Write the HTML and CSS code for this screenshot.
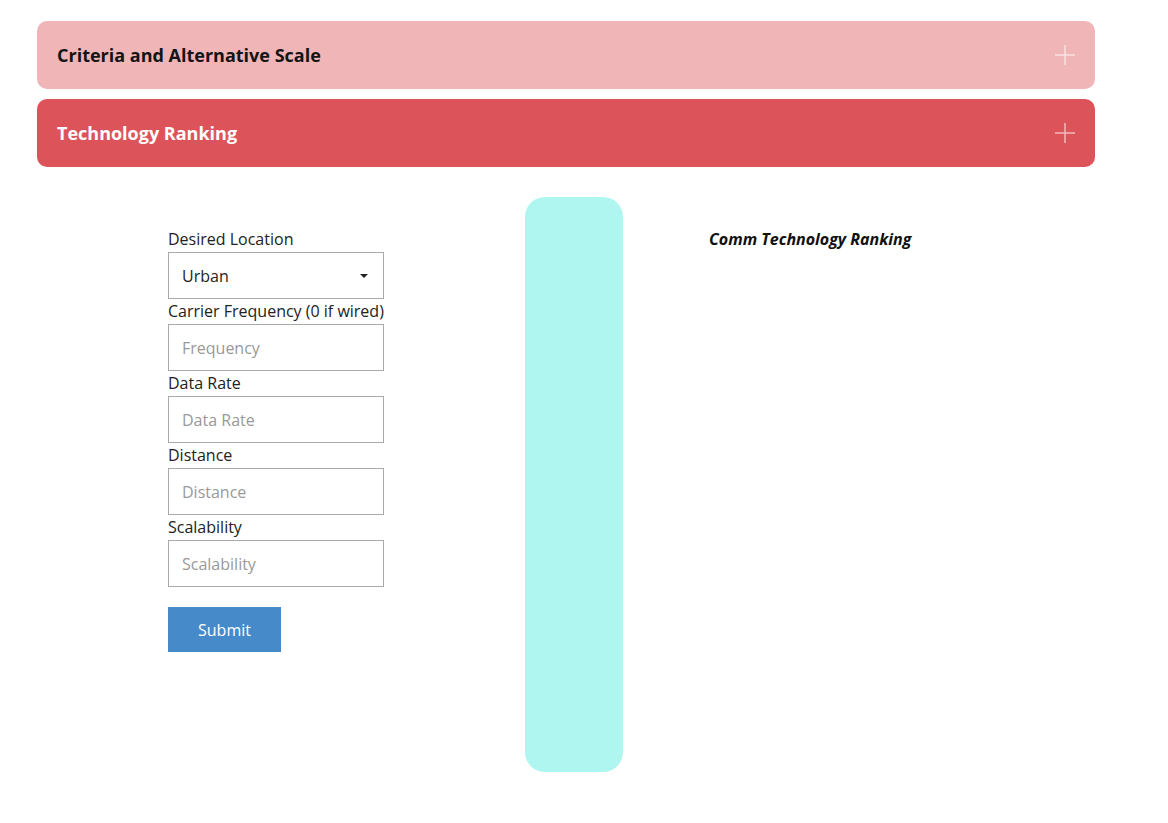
FILE: index.html
```html
<!DOCTYPE html>
<html>
<head>
<meta charset="utf-8">
<link rel="stylesheet" href="styles.css">
</head>
<body>
<div class="page">
  <div class="panel panel-light">
    <span class="panel-title">Criteria and Alternative Scale</span>
    <svg class="plus" width="20" height="20" viewBox="0 0 20 20"><path d="M10 0V20M0 10H20" stroke="#fff" stroke-opacity="0.6" stroke-width="1.5" fill="none"/></svg>
  </div>
  <div class="panel panel-dark">
    <span class="panel-title">Technology Ranking</span>
    <svg class="plus" width="20" height="20" viewBox="0 0 20 20"><path d="M10 0V20M0 10H20" stroke="#fff" stroke-opacity="0.6" stroke-width="1.5" fill="none"/></svg>
  </div>
  <div class="content">
    <form class="form">
      <label class="label">Desired Location</label>
      <div class="select">Urban<span class="caret"></span></div>
      <label class="label">Carrier Frequency (0 if wired)</label>
      <input class="input" placeholder="Frequency">
      <label class="label">Data Rate</label>
      <input class="input" placeholder="Data Rate">
      <label class="label">Distance</label>
      <input class="input" placeholder="Distance">
      <label class="label">Scalability</label>
      <input class="input" placeholder="Scalability">
      <button type="button" class="submit">Submit</button>
    </form>
    <div class="bar"></div>
    <div class="ranking">Comm Technology Ranking</div>
  </div>
</div>
</body>
</html>
```

FILE: styles.css
```css
* { box-sizing: border-box; }
html, body { margin: 0; padding: 0; background: #fff; }
body { font-family: "Open Sans", "Liberation Sans", sans-serif; color: #222; }
.page { padding: 21px 0 0 37px; width: 1095px; }
.panel {
  height: 68px;
  border-radius: 10px;
  display: flex;
  align-items: center;
  justify-content: space-between;
  padding: 0 20px;
  margin-bottom: 10px;
}
.panel-light { background: #f0b5b7; color: #141414; }
.panel-dark { background: #dc535a; color: #fff; }
.panel-title { font-size: 18px; font-weight: 700; }
.plus { display: block; }
.content {
  display: flex;
  align-items: flex-start;
  margin-top: 30px;
  padding-left: 131px;
}
.form {
  width: 216px;
  padding-top: 30px;
  display: flex;
  flex-direction: column;
}
.label { font-size: 16px; line-height: 25px; height: 25px; color: #222; white-space: nowrap; }
.select, .input {
  height: 47px;
  border: 1px solid #aaa;
  font-family: inherit;
  font-size: 16px;
  padding: 0 13px;
  color: #222;
  background: #fff;
  outline: none;
  margin: 0;
  width: 216px;
  border-radius: 0;
}
.select { display: flex; align-items: center; justify-content: space-between; padding-right: 15px; }
.caret {
  width: 0; height: 0;
  border-left: 4px solid transparent;
  border-right: 4px solid transparent;
  border-top: 4px solid #222;
}
.input::placeholder { color: #999; }
.submit {
  margin-top: 20px;
  width: 113px;
  height: 45px;
  background: #468ac9;
  border: none;
  color: #fff;
  font-family: inherit;
  font-size: 16px;
  padding: 0;
}
.bar {
  width: 98px;
  height: 575px;
  background: #aff6f1;
  border-radius: 20px;
  margin-left: 141px;
  flex-shrink: 0;
}
.ranking {
  margin-left: 86px;
  padding-top: 30px;
  font-size: 16px;
  line-height: 25px;
  font-weight: 700;
  font-style: italic;
  color: #111;
}
```
